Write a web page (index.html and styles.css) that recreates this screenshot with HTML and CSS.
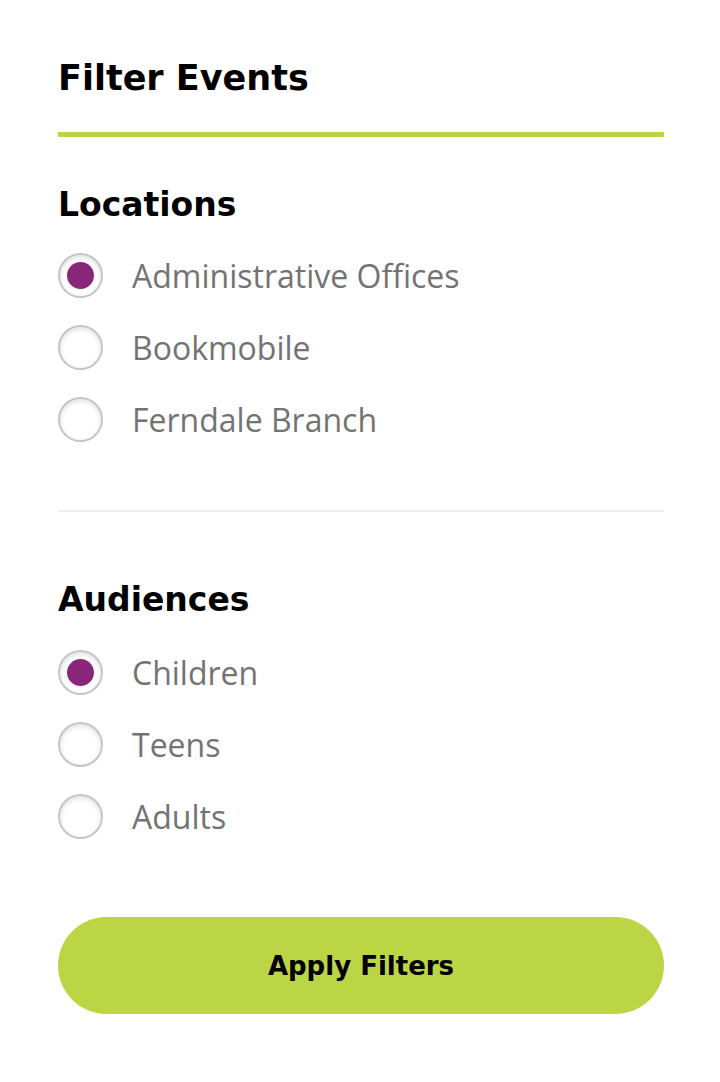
FILE: index.html
```html
<!DOCTYPE html>
<html>
<head>
<meta charset="utf-8">
<link rel="stylesheet" href="styles.css">
</head>
<body>
<div class="panel">
  <h1 class="title">Filter Events</h1>
  <div class="rule"></div>
  <section class="group">
    <h2 class="group-title">Locations</h2>
    <ul class="options">
      <li class="option"><span class="radio checked"></span><span class="label">Administrative Offices</span></li>
      <li class="option"><span class="radio"></span><span class="label">Bookmobile</span></li>
      <li class="option"><span class="radio"></span><span class="label">Ferndale Branch</span></li>
    </ul>
  </section>
  <div class="sep"></div>
  <section class="group group-2">
    <h2 class="group-title">Audiences</h2>
    <ul class="options">
      <li class="option"><span class="radio checked"></span><span class="label">Children</span></li>
      <li class="option"><span class="radio"></span><span class="label">Teens</span></li>
      <li class="option"><span class="radio"></span><span class="label">Adults</span></li>
    </ul>
  </section>
  <button class="apply">Apply Filters</button>
</div>
</body>
</html>
```
FILE: styles.css
```css
html, body { margin: 0; padding: 0; background: #fff; }
.panel {
  padding: 0 56px 0 58px;
  display: flex;
  flex-direction: column;
}
.title {
  margin: 56px 0 0;
  font-family: "DejaVu Sans", sans-serif;
  font-weight: 700;
  font-size: 35px;
  line-height: 44px;
  color: #000;
}
.rule {
  margin-top: 32px;
  height: 5px;
  background: #bcd544;
}
.group { display: flex; flex-direction: column; }
.group-title {
  margin: 48px 0 0;
  font-family: "DejaVu Sans", sans-serif;
  font-weight: 700;
  font-size: 33px;
  line-height: 40px;
  color: #000;
}
.options { list-style: none; margin: 27px 0 0; padding: 0; display: flex; flex-direction: column; gap: 26px; }
.group-2 .options { margin-top: 29px; }
.option { display: flex; align-items: center; gap: 29px; height: 46px; }
.radio {
  width: 45px; height: 45px;
  box-sizing: border-box;
  border: 2px solid #c6c6c6;
  border-radius: 50%;
  background: #fff;
  box-shadow: inset 0 2px 5px rgba(0,0,0,0.13);
  display: flex; align-items: center; justify-content: center;
  flex: none;
}
.radio.checked::after {
  content: "";
  width: 27px; height: 27px;
  border-radius: 50%;
  background: #8a2679;
}
.label {
  font-family: "Open Sans", sans-serif;
  font-size: 32px;
  color: #737373;
}
.sep { margin-top: 68px; height: 2px; background: #efefef; }
.group-2 .group-title { margin-top: 68px; }
.apply {
  margin-top: 78px;
  height: 97px;
  border: none;
  border-radius: 49px;
  background: #bcd544;
  font-family: "DejaVu Sans", sans-serif;
  font-weight: 700;
  font-size: 26px;
  color: #000;
}
```
